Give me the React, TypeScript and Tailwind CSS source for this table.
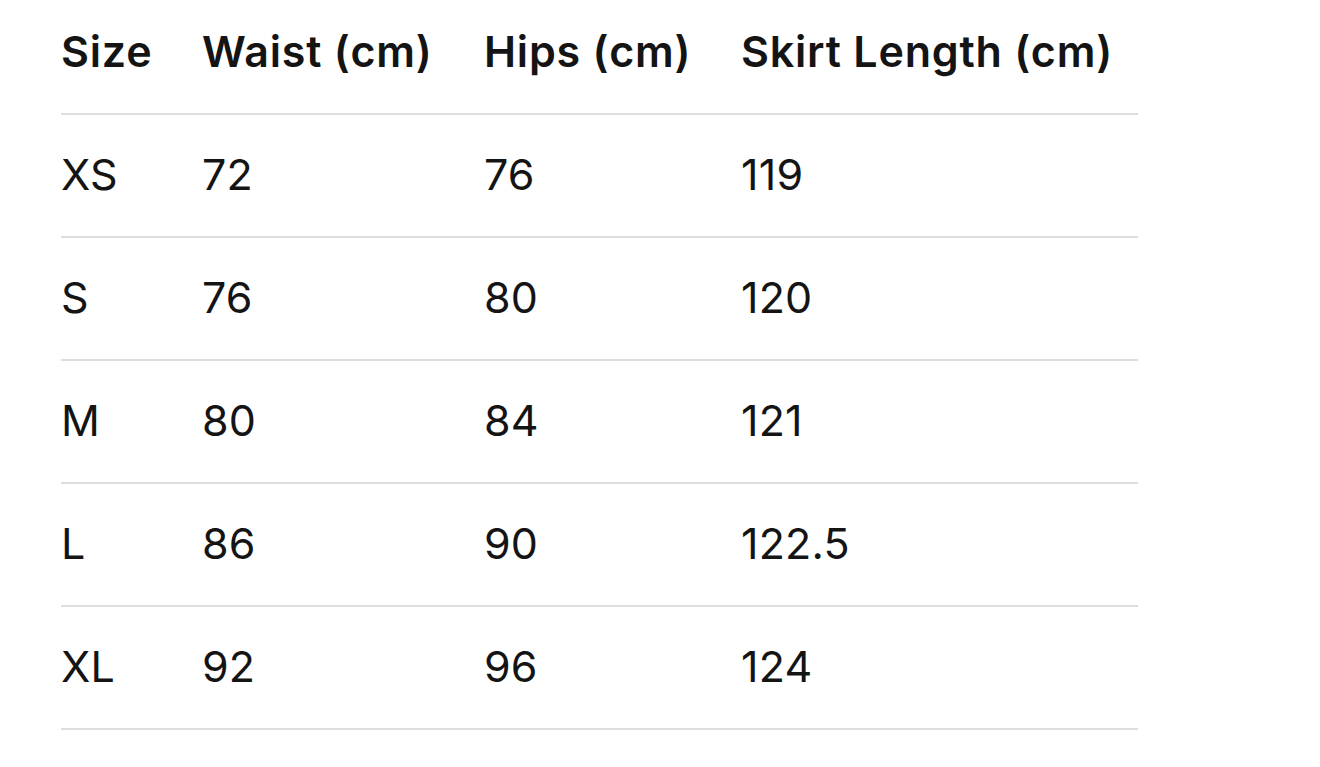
const rows = [
  ['XS', '72', '76', '119'],
  ['S', '76', '80', '120'],
  ['M', '80', '84', '121'],
  ['L', '86', '90', '122.5'],
  ['XL', '92', '96', '124'],
];

const headers = ['Size', 'Waist (cm)', 'Hips (cm)', 'Skirt Length (cm)'];

export default function App() {
  return (
    <div className="min-h-screen bg-white pl-[61px] pr-[182px] text-[#141414]" style={{ fontFamily: 'Inter, "Liberation Sans", sans-serif' }}>
      <table className="w-full border-collapse text-left">
        <colgroup>
          <col className="w-[141px]" />
          <col className="w-[282px]" />
          <col className="w-[257px]" />
          <col />
        </colgroup>
        <thead>
          <tr className="h-[114px] border-b-2 border-[#dedede]">
            {headers.map(h => (
              <th key={h} className="p-0 pb-[10px] text-[43px] font-semibold leading-none tracking-[0.8px]">{h}</th>
            ))}
          </tr>
        </thead>
        <tbody>
          {rows.map(r => (
            <tr key={r[0]} className="h-[123px] border-b-2 border-[#dedede]">
              {r.map((c, i) => (
                <td key={i} className="p-0 pb-[3px] text-[43px] font-normal leading-none tracking-[0.2px]">{c}</td>
              ))}
            </tr>
          ))}
        </tbody>
      </table>
    </div>
  );
}
